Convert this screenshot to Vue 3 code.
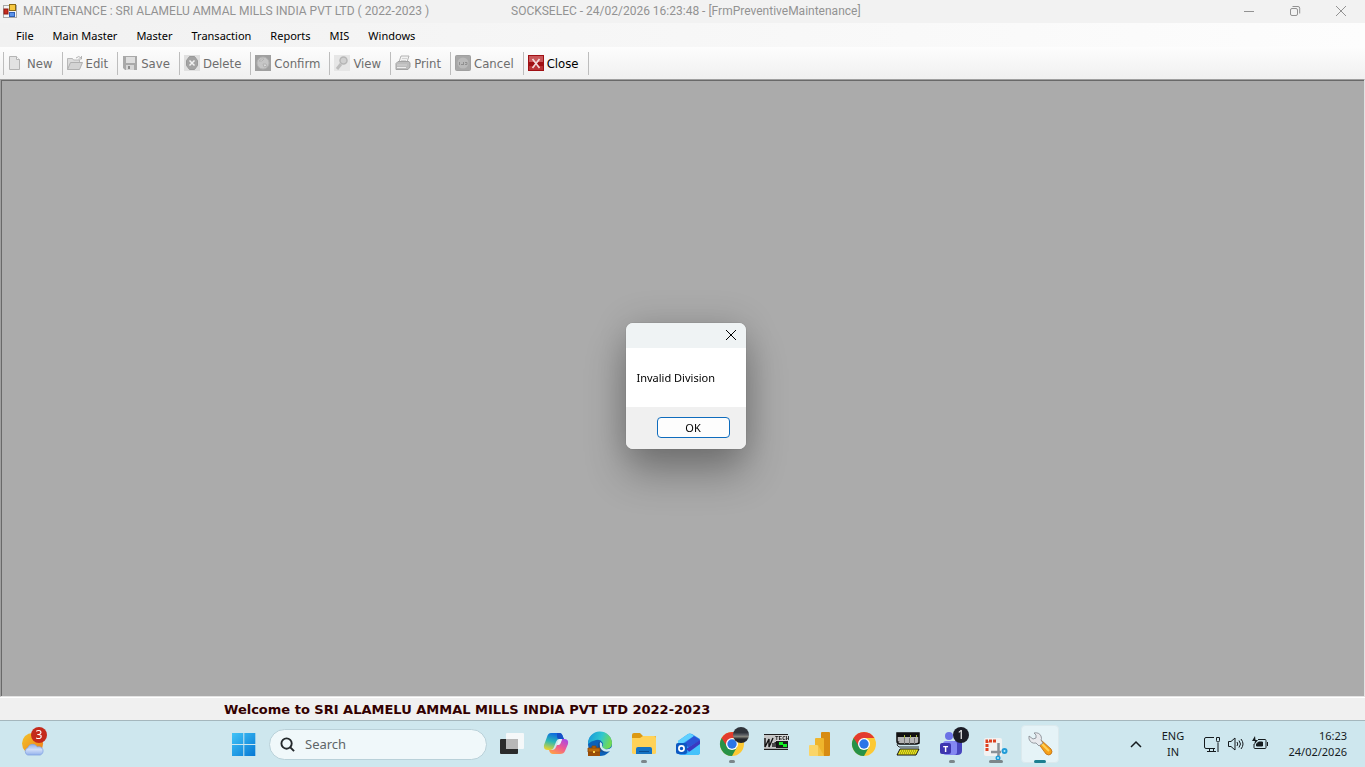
<template>
    <div class="screen">
        <!-- window caption -->
        <header class="caption">
            <svg class="app-icon" viewBox="0 0 14 14" aria-hidden="true">
                <rect x="0.5" y="1.5" width="13" height="12" fill="#f4f4f4" stroke="#a9a9a9" />
                <rect x="1" y="5" width="4" height="5" fill="#c82a1c" stroke="#8e1a12" />
                <rect x="6.5" y="0.5" width="6" height="6" fill="#f7c840" stroke="#8c6a14" />
                <rect x="6.5" y="8.5" width="5" height="4" fill="#5b93ea" stroke="#2f5fb5" />
            </svg>
            <h1 class="caption-company">MAINTENANCE : SRI ALAMELU AMMAL MILLS INDIA PVT LTD ( 2022-2023 )</h1>
            <span class="caption-form">SOCKSELEC - 24/02/2026 16:23:48 - [FrmPreventiveMaintenance]</span>
            <div class="caption-buttons">
                <button type="button" aria-label="Minimize">
                    <svg viewBox="0 0 12 12"><path d="M1 6.5h10" /></svg>
                </button>
                <button type="button" aria-label="Restore">
                    <svg viewBox="0 0 12 12">
                        <rect x="1.5" y="3.5" width="7" height="7" rx="1.5" />
                        <path d="M3.5 1.5H9a1.7 1.7 0 0 1 1.7 1.7V8.5" />
                    </svg>
                </button>
                <button type="button" aria-label="Close window">
                    <svg viewBox="0 0 12 12"><path d="M1 1l10 10M11 1L1 11" /></svg>
                </button>
            </div>
        </header>

        <nav class="menu">
            <button v-for="item in menuItems" :key="item" type="button">{{ item }}</button>
        </nav>

        <div class="toolbar">
            <button v-for="tool in tools" :key="tool" type="button" :disabled="tool !== 'Close'">
                <svg viewBox="0 0 16 16" aria-hidden="true">
                    <g v-if="tool === 'New'">
                        <path d="M1.5 1.5h7l3 3v10h-10z" fill="#e2e2e2" stroke="#b4b4b4" />
                        <path d="M8.5 1.5v3h3" fill="#fafafa" stroke="#b4b4b4" />
                    </g>
                    <g v-else-if="tool === 'Edit'">
                        <path d="M.5 14.5v-11h5l1 1.500h6v3" fill="#dcdcdc" stroke="#b8b8b8" />
                        <path d="M.5 14.5l3-7h12l-3 7z" fill="#d3d3d3" stroke="#b0b0b0" />
                        <path d="M9 3q3-3 5 0M14.5 1v3h-3" fill="none" stroke="#b2b2b2" />
                    </g>
                    <g v-else-if="tool === 'Save'">
                        <path d="M1 1h14v14H3l-2-2z" fill="#a9a9a9" />
                        <rect x="4" y="2" width="9" height="6" fill="#dedede" />
                        <rect x="4" y="10" width="8" height="5" fill="#d6d6d6" />
                        <rect x="6" y="11" width="2" height="3" fill="#8d8d8d" />
                    </g>
                    <g v-else-if="tool === 'Delete'">
                        <rect width="16" height="16" fill="#e0e0e0" />
                        <path d="M5.5 1.5h5l3 4v5l-3 4h-5l-3-4v-5z" fill="#a4a4a4" stroke="#999" />
                        <path d="M5.5 5.5l5 5M10.5 5.5l-5 5" stroke="#f1f1f1" stroke-width="1.5" />
                    </g>
                    <g v-else-if="tool === 'Confirm'">
                        <rect width="16" height="16" fill="#a0a0a0" />
                        <circle cx="8" cy="8" r="6" fill="#c6c6c6" stroke="#b3b3b3" />
                        <path d="M4 6q3-3 5-2l-2 2zM8 9h3l1 2-3 1z" fill="#d8d8d8" stroke="#b2b2b2" />
                    </g>
                    <g v-else-if="tool === 'View'">
                        <rect width="16" height="16" fill="#e6e6e6" />
                        <path d="M7 9l-4 5" stroke="#bdbdbd" stroke-width="3" />
                        <circle cx="9.5" cy="5.5" r="3.5" fill="#d0d0d0" stroke="#b6b6b6" stroke-width="1.5" />
                    </g>
                    <g v-else-if="tool === 'Print'">
                        <path d="M4 7l2-6h8l-2 6z" fill="#f2f2f2" stroke="#b3b3b3" />
                        <path d="M1 8.5l2-2h11l1 1.500v4l-2 2.500H1z" fill="#bdbdbd" stroke="#a3a3a3" />
                        <path d="M7 3.5h5M6 5.5h5M2 10h10" stroke="#d2d2d2" />
                        <path d="M2 12.5h9" stroke="#ededed" />
                    </g>
                    <g v-else-if="tool === 'Cancel'">
                        <rect x="0.5" y="0.5" width="15" height="15" rx="1" fill="#a8a8a8" stroke="#a0a0a0" />
                        <circle cx="8" cy="8" r="5.5" fill="#bababa" />
                        <path d="M4.5 7v3M6 9.5h2M8.5 7v3M10 7.5h2v2h-2" stroke="#909090" fill="none" />
                    </g>
                    <g v-else>
                        <rect width="16" height="16" fill="#a01014" />
                        <rect x="1" y="1" width="14" height="6" fill="#c9575a" />
                        <rect x="1" y="11" width="14" height="4" fill="#b93235" />
                        <path d="M4.5 4l7 9M11.5 4l-7 9" stroke="#f3dada" stroke-width="1.7" />
                    </g>
                </svg>
                {{ tool }}
            </button>
        </div>

        <main class="workspace">
            <div v-if="dialogOpen" class="overlay">
                <section class="dialog" role="alertdialog" aria-labelledby="dialog-text">
                    <div class="dialog-caption">
                        <button type="button" aria-label="Close dialog" @click="dialogOpen = false">
                            <svg viewBox="0 0 12 12"><path d="M1 1l10 10M11 1L1 11" /></svg>
                        </button>
                    </div>
                    <p id="dialog-text">Invalid Division</p>
                    <div class="dialog-actions">
                        <button type="button" @click="dialogOpen = false">OK</button>
                    </div>
                </section>
            </div>
        </main>

        <div class="status">Welcome to SRI ALAMELU AMMAL MILLS INDIA PVT LTD 2022-2023</div>

        <footer class="taskbar">
            <div class="widgets">
                <button type="button" aria-label="Weather" class="weather">
                    <svg viewBox="0 0 24 24">
                        <defs>
                            <linearGradient id="sun" x1="0" y1="0" x2="1" y2="1">
                                <stop offset="0" stop-color="#f2c52c" />
                                <stop offset="1" stop-color="#f07a16" />
                            </linearGradient>
                            <linearGradient id="cloud" x1="0" y1="0" x2="0" y2="1">
                                <stop offset="0" stop-color="#8fb0e8" />
                                <stop offset="0.5" stop-color="#cfddf8" />
                                <stop offset="1" stop-color="#92b1ec" />
                            </linearGradient>
                        </defs>
                        <circle cx="11" cy="11" r="11" fill="url(#sun)" />
                        <path d="M6 23a4 4 0 0 1 0-7.500 5.500 5.500 0 0 1 10-1 4.500 4.500 0 0 1 3 8.500z" fill="url(#cloud)" stroke="#83a3e2" stroke-width=".8" />
                    </svg>
                    <span class="badge badge-red">3</span>
                </button>
            </div>

            <div class="apps">
                <button type="button" aria-label="Start" class="app">
                    <svg viewBox="0 0 24 24">
                        <defs>
                            <linearGradient id="win" x1="0" y1="0" x2="1" y2="1">
                                <stop offset="0" stop-color="#42c4f7" />
                                <stop offset="1" stop-color="#0678d4" />
                            </linearGradient>
                        </defs>
                        <path d="M0 1h11.300v11H0zM12.300 1h11v11h-11zM0 13h11.300v11H0zM12.300 13h11v11h-11z" fill="url(#win)" />
                    </svg>
                </button>

                <label class="search">
                    <svg viewBox="0 0 16 16" aria-hidden="true">
                        <circle cx="7" cy="7" r="5.5" />
                        <path d="M11 11l4 4" />
                    </svg>
                    <input v-model="query" type="text" placeholder="Search" aria-label="Search" />
                </label>

                <button v-for="app in apps" :key="app.name" type="button" :aria-label="app.name" class="app" :class="[app.state]">
                    <svg viewBox="0 0 24 24">
                        <g v-if="app.name === 'Task View'">
                            <rect x="0" y="7" width="18" height="15" rx="1" fill="#2b2b2b" />
                            <rect x="6" y="1" width="18" height="16" rx="1" fill="#fafafa" opacity=".9" />
                            <rect x="6" y="7" width="12" height="10" fill="#b7b7b7" />
                        </g>
                        <g v-else-if="app.name === 'Copilot'">
                            <defs>
                                <linearGradient id="cpA" x1="0.5" y1="0" x2="0.2" y2="1">
                                    <stop offset="0" stop-color="#0d68e0" />
                                    <stop offset="0.5" stop-color="#2bb9b4" />
                                    <stop offset="1" stop-color="#f0d427" />
                                </linearGradient>
                                <linearGradient id="cpB" x1="0.8" y1="0" x2="0.2" y2="1">
                                    <stop offset="0" stop-color="#a948e4" />
                                    <stop offset="0.5" stop-color="#f05a91" />
                                    <stop offset="1" stop-color="#ffa143" />
                                </linearGradient>
                            </defs>
                            <path d="M7 1h8q3 0 4 4l1 2h-5q-2 0-3 3l-2 5q-1 3-4 3H4q-5 0-4-5L3 5q1-4 4-4z" fill="url(#cpA)" />
                            <path d="M13 1h3q2 0 3 4l1 2h-5q-2 0-2-3z" fill="#1650c7" />
                            <path d="M18 7h2q5 0 4 5l-3 7q-1 3-5 3H9q-3 0-4-4h3q3 0 4-3l1-2h2q1 0 2-3z" fill="url(#cpB)" />
                            <path d="M15 7h3l-1 3q-1 3-4 3z" fill="#e9f3f8" />
                        </g>
                        <g v-else-if="app.name === 'Edge'">
                            <defs>
                                <linearGradient id="edgeA" x1="0" y1="0" x2="1" y2="0.3">
                                    <stop offset="0" stop-color="#1593dc" />
                                    <stop offset="0.6" stop-color="#31c7ce" />
                                    <stop offset="1" stop-color="#70d957" />
                                </linearGradient>
                            </defs>
                            <circle cx="12" cy="12" r="12" fill="#0c61b8" />
                            <path d="M0 12a12 12 0 0 1 24-1q0 6-7 6-4 0-3-2 2-3 0-5-2-3-6-2-5 1-8 4z" fill="url(#edgeA)" />
                            <path d="M11 10q-3 5 1 9 4 3 10 0l1-3q-3 3-7 1-3-1-2-3 1-4-3-4z" fill="#164f96" />
                            <path d="M12 10q3 1 2 4 0 2 3 3 4 1 7-2l-1 4q-6 2-9-1-3-3-2-8z" fill="#cfe9f2" />
                            <rect x="0" y="16" width="12" height="8" fill="#9c4d05" />
                            <path d="M0 16h12v4H0zM4 16v-2h4v2" fill="#bb6a0a" stroke="#854107" stroke-width=".8" />
                            <rect x="5" y="19" width="2" height="2" fill="#ffd34d" />
                        </g>
                        <g v-else-if="app.name === 'File Explorer'">
                            <path d="M0 3q0-2 2-2h6l3 3h12q1 0 1 1v8H0z" fill="#dc9912" />
                            <path d="M0 6h8l3-2h11q2 0 2 2v15q0 1-2 1H2q-2 0-2-1z" fill="#ffd258" />
                            <path d="M4 22v-5q0-2 2-2h12q2 0 2 2v5z" fill="#1673c2" />
                            <path d="M7 19.5h10" stroke="#0a4e92" />
                        </g>
                        <g v-else-if="app.name === 'Outlook'">
                            <path d="M2 9L12 2q2-1 4 0l8 5v13q0 3-3 3H5q-3 0-3-3z" fill="#2f9cf6" />
                            <path d="M2 9L12 2q2-1 3 0l3 2L4 13H2z" fill="#5fd0ff" />
                            <path d="M6 13L18 4l5 3q1 1 0 2l-10 6z" fill="#2b54d6" />
                            <path d="M10 17L24 8v5l-9 8z" fill="#3a38c0" />
                            <path d="M9 23l15-11v8q0 3-3 3z" fill="#43c2fb" />
                            <rect x="0" y="11" width="11" height="11" rx="2" fill="#0c59c2" />
                            <circle cx="5.5" cy="16.5" r="2.6" fill="none" stroke="#fff" stroke-width="1.7" />
                        </g>
                        <g v-else-if="app.name.startsWith('Chrome')">
                            <circle cx="12" cy="12" r="12" fill="#fcc934" />
                            <path d="M1.600 6A12 12 0 0 0 12 24l5-9-5-3z" fill="#279247" />
                            <path d="M1.600 6A12 12 0 0 1 22.400 6H12l-5 8.500z" fill="#e33b2e" />
                            <circle cx="12" cy="12" r="6" fill="#fff" />
                            <circle cx="12" cy="12" r="4.7" fill="#2a75e8" />
                        </g>
                        <g v-else-if="app.name === 'WinTech'">
                            <rect x="0" y="2" width="24" height="16" fill="#1d1d1d" />
                            <rect x="0" y="3" width="12" height="13" fill="#c6c6c6" />
                            <rect x="12" y="3" width="12" height="6" fill="#d9d9d9" />
                            <path d="M1 6v9l4-8v8l4-9M9 11v4M11 15v-4q2-1 2 1v3" fill="none" stroke="#111" stroke-width="1.4" />
                            <text x="11" y="8" class="tech-text" fill="#111">TECH</text>
                            <path d="M15 10h4v3h-4zM19 12h4v3h-4z" fill="#12ef23" />
                            <rect x="0" y="16" width="24" height="1" fill="#aaa" />
                        </g>
                        <g v-else-if="app.name === 'Power BI'">
                            <rect x="13" y="0" width="9" height="24" rx="1" fill="#d78b12" />
                            <path d="M7 7q0-1 1-1h7q1 0 1 1v17H7z" fill="#efb52c" />
                            <path d="M1 14q0-1 1-1h7q1 0 1 1v10H2q-1 0-1-1z" fill="#fad568" />
                            <path d="M10 13l6 11h-6z" fill="#f3c246" />
                        </g>
                        <g v-else-if="app.name === 'PLC'">
                            <path d="M1 1h22v10q-2 1-3 1H4q-3 0-3-3z" fill="#b5b5b5" stroke="#090909" stroke-width="1.500" />
                            <rect x="1" y="1" width="22" height="4" fill="#111" />
                            <path d="M8.5 6v6M13.5 6v6M18.5 6v6" stroke="#777" />
                            <path d="M8.5 3v3M14.5 3v3M20.5 3v2" stroke="#a3b938" />
                            <path d="M3 9l-2 4 2 2h20" fill="none" stroke="#333" />
                            <path d="M4 17h19l-3 6H1z" fill="#e5e11b" stroke="#111" />
                            <path d="M5 19h16M4 21h16" stroke="#777018" stroke-dasharray="1 1" />
                        </g>
                        <g v-else-if="app.name === 'Teams'">
                            <circle cx="9" cy="4" r="4" fill="#6b72e6" />
                            <path d="M13 9h9v10q0 4-5 4h-4z" fill="#4846bf" />
                            <rect x="3" y="9" width="14" height="14" rx="3" fill="#8488f2" />
                            <rect x="0" y="11" width="11" height="11" rx="2" fill="#3d36af" />
                            <text x="3" y="20" class="teams-text" fill="#fff">T</text>
                        </g>
                        <g v-else-if="app.name === 'Snipping Tool'">
                            <rect x="0" y="6" width="18" height="18" rx="2" fill="#f2f2f2" />
                            <path d="M3 19V9h10" fill="none" stroke="#dd4120" stroke-width="3" stroke-dasharray="3 1" />
                            <path d="M14.500 11v13M7 20h10" stroke="#8a9197" stroke-width="2.500" />
                            <circle cx="20.500" cy="19" r="3" fill="#209bd7" />
                            <circle cx="14" cy="26" r="2.500" fill="#209bd7" />
                            <circle cx="20.500" cy="19" r="1" fill="#b7edff" />
                            <circle cx="14" cy="26" r="1" fill="#b7edff" />
                        </g>
                        <g v-else>
                            <path d="M10 11l3-3 10 9q2 3 0 5-2 2-5 0z" fill="#f6a018" stroke="#bd6b10" stroke-width=".8" />
                            <path d="M14 12l7 7" stroke="#ffd057" stroke-width="2" />
                            <path d="M6 1q5-1 7 3 1 3 0 4l2 3-4 3-3-3q-5 1-7-4l0-3 4 3 3-1V3z" fill="#e8e9ed" stroke="#80858d" stroke-width=".8" />
                        </g>
                    </svg>
                    <span v-if="app.name === 'Teams'" class="badge badge-dark">1</span>
                    <span v-if="app.name === 'Chrome Work'" class="badge badge-profile"></span>
                </button>
            </div>

            <div class="tray">
                <button type="button" aria-label="Show hidden icons" class="chevron">
                    <svg viewBox="0 0 12 12"><path d="M1 9l5-5 5 5" /></svg>
                </button>
                <button type="button" class="language">ENG<br />IN</button>
                <button type="button" aria-label="Network, volume and battery" class="system">
                    <svg viewBox="0 0 16 16">
                        <path d="M10 1.500H2q-1.500 0-1.500 1.500v8q0 1.500 1.500 1.500h9M14 7v9M5.500 13v2.500M9.500 13v2.500M3 15.500h9" />
                        <path d="M12.500 1.500h3v3q0 1.500-1.500 1.500t-1.500-1.500z" />
                    </svg>
                    <svg viewBox="0 0 16 16">
                        <path d="M.5 5.500v5h2.500l4 3.500V2L3 5.500zM9 6q1.500 2 0 4M11 4.500q3 3.500 0 7M13 3q4 5 0 10" />
                    </svg>
                    <svg viewBox="0 0 16 16">
                        <path d="M6 3.500h7q1 0 1 1v7q0 1-1 1H3q-1 0-1-1V8M15.500 6v4" />
                        <path d="M4.500 10V8l2-2h4v4z" fill="#151b1e" />
                        <path d="M3 0L0 5h3l-1 4 4-5H3.500z" fill="#151b1e" stroke="none" />
                    </svg>
                </button>
                <button type="button" class="clock">16:23<br />24/02/2026</button>
            </div>
        </footer>
    </div>
</template>

<script setup>
import { ref } from 'vue';

// state of the message box and the taskbar search
const dialogOpen = ref(true);
const query = ref('');

const menuItems = ['File', 'Main Master', 'Master', 'Transaction', 'Reports', 'MIS', 'Windows'];

const tools = ['New', 'Edit', 'Save', 'Delete', 'Confirm', 'View', 'Print', 'Cancel', 'Close'];

// pinned and running apps, state sets the indicator below the icon
const apps = [
    { name: 'Task View', state: '' },
    { name: 'Copilot', state: '' },
    { name: 'Edge', state: '' },
    { name: 'File Explorer', state: 'running' },
    { name: 'Outlook', state: '' },
    { name: 'Chrome Work', state: 'running' },
    { name: 'WinTech', state: '' },
    { name: 'Power BI', state: '' },
    { name: 'Chrome', state: '' },
    { name: 'PLC', state: '' },
    { name: 'Teams', state: 'running' },
    { name: 'Snipping Tool', state: 'running wide' },
    { name: 'Maintenance', state: 'running active' },
];
</script>

<style>
body {
    margin: 0;
}
</style>

<style scoped>
.screen {
    display: flex;
    flex-direction: column;
    min-height: 100vh;
    background: #f0f0f0;
    font-family: 'Noto Sans', 'Open Sans', sans-serif;
    font-size: 12px;
    color: #000;
}

button {
    padding: 0;
    border: 0;
    background: none;
    font: inherit;
    color: inherit;
    white-space: nowrap;
}

svg {
    display: block;
    flex: none;
    overflow: visible;
}

/* caption */
.caption {
    display: flex;
    align-items: center;
    height: 22px;
    padding: 0 1px 1px 3px;
    background: #f2f2f2;
    color: #929292;
    font-family: Roboto, 'Noto Sans', sans-serif;
    white-space: nowrap;
}

.app-icon {
    width: 14px;
    height: 14px;
    margin-right: 6px;
}

.caption-company {
    width: 400px;
    margin: 0;
    font-size: 12px;
    font-weight: 400;
}

.caption-form {
    margin-left: 88px;
}

.caption-buttons {
    display: flex;
    margin-left: auto;
}

.caption-buttons button {
    display: grid;
    place-items: center;
    width: 46px;
    height: 20px;
}

.caption-buttons svg,
.dialog-caption svg {
    width: 12px;
    height: 12px;
    fill: none;
    stroke: currentColor;
}

/* menu */
.menu {
    display: flex;
    align-items: center;
    gap: 19px;
    height: 24px;
    padding-left: 16px;
    background: linear-gradient(90deg, #f1f1f1, #fdfdfd);
    font-size: 11px;
}

/* toolbar */
.toolbar {
    display: flex;
    align-items: center;
    height: 32px;
    padding-left: 3px;
    background: linear-gradient(#fdfdfd, #f0f0f0);
    font-family: 'DejaVu Sans Condensed', 'DejaVu Sans', sans-serif;
    font-size: 13px;
}

.toolbar button {
    display: flex;
    align-items: center;
    gap: 3px;
    height: 23px;
    padding: 0 9px 0 4px;
    border-left: 1px solid #bdbdbd;
}

.toolbar button:disabled {
    color: #6d6d6d;
}

.toolbar button:last-child {
    border-right: 1px solid #bdbdbd;
}

.toolbar svg {
    width: 16px;
    height: 16px;
}

/* mdi area */
.workspace {
    flex: 1;
    border: 1px solid #a0a0a0;
    border-right-color: #e3e3e3;
    border-bottom-color: #e3e3e3;
    background: #ababab;
    box-shadow: inset 1px 1px #696969;
}

.overlay {
    position: fixed;
    inset: 0;
    display: grid;
    place-items: center;
    padding: 5px 0 0 6px;
}

.dialog {
    width: 120px;
    overflow: hidden;
    border-radius: 7px;
    background: #fff;
    box-shadow: 0 0 1px #555, 0 24px 40px rgba(0, 0, 0, 0.3), 0 0 36px rgba(0, 0, 0, 0.14);
    font-size: 11px;
}

.dialog-caption {
    display: flex;
    align-items: flex-start;
    justify-content: flex-end;
    height: 25px;
    background: #eff3f4;
}

.dialog-caption button {
    display: grid;
    place-items: center;
    width: 30px;
    height: 24px;
}

.dialog p {
    margin: 0;
    padding: 22px 11px;
    line-height: 15px;
    white-space: nowrap;
}

.dialog-actions {
    display: flex;
    justify-content: flex-end;
    padding: 10px 16px 11px;
    background: #f0f0f0;
}

.dialog-actions button {
    width: 73px;
    height: 21px;
    border: 1px solid #0f6cbd;
    border-radius: 4px;
    background: #fdfdfd;
}

/* status line */
.status {
    height: 23px;
    padding-left: 224px;
    border-top: 1px solid #fff;
    box-sizing: border-box;
    color: #330000;
    font-family: 'DejaVu Sans', Verdana, sans-serif;
    font-size: 13px;
    font-weight: 700;
    line-height: 23px;
    white-space: nowrap;
}

/* taskbar */
.taskbar {
    display: flex;
    align-items: center;
    height: 47px;
    border-top: 1px solid #a5b7bd;
    box-sizing: border-box;
    background: #cee7ee;
    color: #151b1e;
}

.widgets {
    width: 222px;
}

.weather {
    position: relative;
    display: block;
    margin-left: 22px;
}

.weather svg {
    width: 23px;
    height: 23px;
}

.apps {
    display: flex;
    align-items: center;
}

.app {
    position: relative;
    display: grid;
    place-items: center;
    width: 44px;
    height: 46px;
}

.app svg {
    position: relative;
    width: 24px;
    height: 24px;
}

.search {
    display: flex;
    align-items: center;
    gap: 10px;
    width: 218px;
    height: 31px;
    margin: 0 3px;
    padding: 0 10px;
    box-sizing: border-box;
    border: 1px solid #b9d1d9;
    border-radius: 16px;
    background: #f0f8fa;
}

.search svg {
    width: 15px;
    height: 15px;
    fill: none;
    stroke: #23282b;
    stroke-width: 2;
}

.search input {
    min-width: 0;
    padding: 0;
    border: 0;
    outline: 0;
    background: none;
    font: inherit;
    font-size: 13px;
}

.search input::placeholder {
    color: #5e6568;
    opacity: 1;
}

.running::after {
    content: '';
    position: absolute;
    bottom: 4px;
    left: 19px;
    width: 6px;
    height: 3px;
    border-radius: 2px;
    background: #7b868a;
}

.wide::after {
    left: 15px;
    width: 14px;
}

.active::before {
    content: '';
    position: absolute;
    inset: 4px 3px;
    border: 1px solid #dbe9ed;
    border-radius: 4px;
    background: #e5f3f7;
}

.active::after {
    left: 16px;
    width: 12px;
    background: #1c7f91;
}

.badge {
    position: absolute;
    width: 16px;
    height: 16px;
    border-radius: 50%;
    color: #fff;
    font-size: 12px;
    line-height: 16px;
    text-align: center;
}

.badge-red {
    top: -6px;
    left: 9px;
    background: #c42b1c;
}

.badge-dark {
    top: 6px;
    right: 5px;
    background: #1c1d26;
}

.badge-profile {
    top: 6px;
    right: 5px;
    background: linear-gradient(#30343b 35%, #5d6066 50%, #85847c 60%, #25272b 75%);
}

.tech-text {
    font: 700 6px 'Liberation Mono', monospace;
}

.teams-text {
    font: 700 9px 'Open Sans', sans-serif;
}

.tray {
    display: flex;
    align-items: center;
    margin-left: auto;
    padding-right: 18px;
    font-size: 12px;
    line-height: 16px;
}

.tray svg {
    fill: none;
    stroke: currentColor;
}

.chevron svg {
    width: 12px;
    height: 12px;
    stroke-width: 1.5;
}

.language {
    width: 62px;
    font-size: 11px;
}

.system {
    display: flex;
    gap: 8px;
}

.system svg {
    width: 16px;
    height: 16px;
}

.clock {
    width: 79px;
    font-size: 11px;
    text-align: right;
}
</style>
